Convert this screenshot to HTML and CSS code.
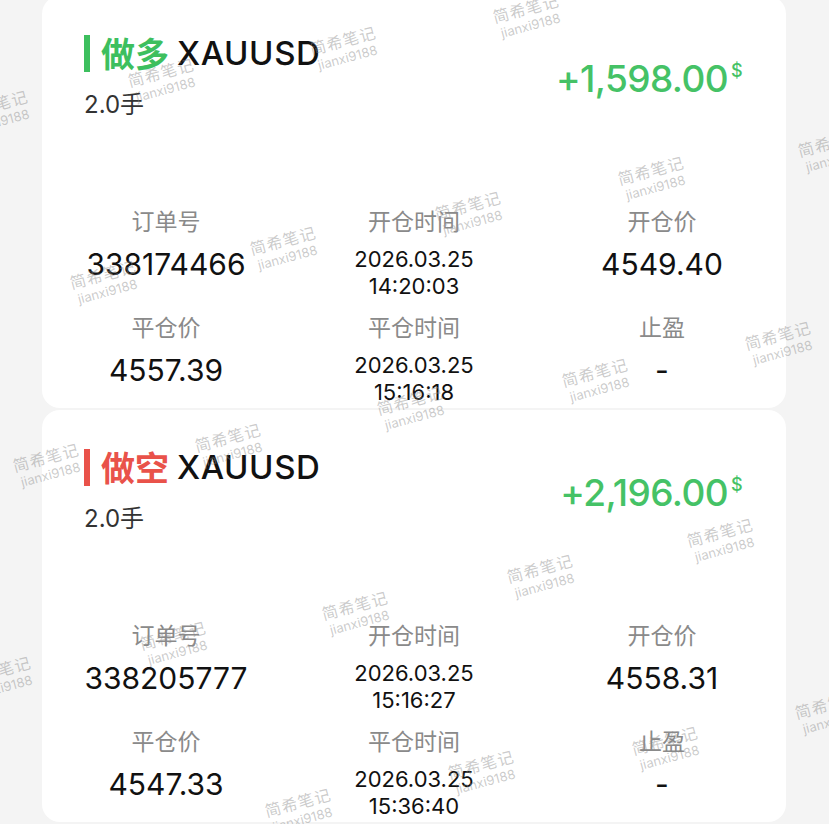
FILE: index.html
```html
<!DOCTYPE html>
<html lang="zh-CN">
<head>
    <meta charset="UTF-8">
    <meta name="viewport" content="width=device-width, initial-scale=1.0">
    <title>交易记录</title>
    <link rel="stylesheet" href="styles.css">
</head>
<body>
    <div class="list">
        <div class="card">
            <div class="card-head">
                <div class="head-left">
                    <div class="title">
                        <span class="bar bar-long"></span>
                        <span class="side side-long">做多</span>
                        <span class="symbol">XAUUSD</span>
                    </div>
                    <div class="lots">2.0手</div>
                </div>
                <div class="profit">+1,598.00<span class="unit">$</span></div>
            </div>
            <div class="info">
                <div class="cell">
                    <div class="label">订单号</div>
                    <div class="value">338174466</div>
                </div>
                <div class="cell">
                    <div class="label">开仓时间</div>
                    <div class="value time">2026.03.25<br>14:20:03</div>
                </div>
                <div class="cell">
                    <div class="label">开仓价</div>
                    <div class="value">4549.40</div>
                </div>
                <div class="cell">
                    <div class="label">平仓价</div>
                    <div class="value">4557.39</div>
                </div>
                <div class="cell">
                    <div class="label">平仓时间</div>
                    <div class="value time">2026.03.25<br>15:16:18</div>
                </div>
                <div class="cell">
                    <div class="label">止盈</div>
                    <div class="value">-</div>
                </div>
            </div>
        </div>

        <div class="card">
            <div class="card-head">
                <div class="head-left">
                    <div class="title">
                        <span class="bar bar-short"></span>
                        <span class="side side-short">做空</span>
                        <span class="symbol">XAUUSD</span>
                    </div>
                    <div class="lots">2.0手</div>
                </div>
                <div class="profit">+2,196.00<span class="unit">$</span></div>
            </div>
            <div class="info">
                <div class="cell">
                    <div class="label">订单号</div>
                    <div class="value">338205777</div>
                </div>
                <div class="cell">
                    <div class="label">开仓时间</div>
                    <div class="value time">2026.03.25<br>15:16:27</div>
                </div>
                <div class="cell">
                    <div class="label">开仓价</div>
                    <div class="value">4558.31</div>
                </div>
                <div class="cell">
                    <div class="label">平仓价</div>
                    <div class="value">4547.33</div>
                </div>
                <div class="cell">
                    <div class="label">平仓时间</div>
                    <div class="value time">2026.03.25<br>15:36:40</div>
                </div>
                <div class="cell">
                    <div class="label">止盈</div>
                    <div class="value">-</div>
                </div>
            </div>
        </div>
    </div>

    <div class="watermarks" id="watermarks"></div>

    <script>
        // watermark centres, measured off the screen
        const marks = [
            [528, 16], [163, 80], [345, 48], [-3, 112], [833, 150],
            [653, 178], [470, 213], [285, 248], [105, 282], [780, 343],
            [597, 380], [412, 408], [230, 445], [48, 465], [722, 540],
            [542, 576], [357, 613], [175, 643], [0, 678], [830, 712],
            [667, 748], [483, 772], [300, 810]
        ];

        const layer = document.getElementById('watermarks');
        marks.forEach(([x, y]) => {
            const mark = document.createElement('div');
            mark.className = 'mark';
            mark.style.left = x + 'px';
            mark.style.top = y + 'px';
            mark.innerHTML = '<span class="mark-cn">简希笔记</span><span class="mark-en">jianxi9188</span>';
            layer.appendChild(mark);
        });
    </script>
</body>
</html>
```

FILE: styles.css
```css
body {
    margin: 0;
    background-color: #f4f4f4;
    font-family: "Inter", "Noto Sans CJK SC", sans-serif;
    color: #111;
    overflow: hidden;
}
.list {
    display: flex;
    flex-direction: column;
    gap: 2px;
    margin: -4px 43px 0 42px;
}
.card {
    background-color: #fff;
    border-radius: 18px;
    padding-bottom: 2px;
}
.card-head {
    display: flex;
    justify-content: space-between;
    align-items: center;
    padding: 37px 44px 0 42px;
}
.title {
    display: flex;
    align-items: center;
    height: 40px;
}
.bar {
    width: 6px;
    height: 37px;
    margin-right: 11px;
}
.bar-long {
    background-color: #3dbf5e;
}
.bar-short {
    background-color: #e9524a;
}
.side {
    font-family: "Noto Sans CJK SC", sans-serif;
    font-size: 34px;
    font-weight: 700;
    line-height: 40px;
    margin-right: 8px;
}
.side-long {
    color: #3dbf5e;
}
.side-short {
    color: #e9524a;
}
.symbol {
    font-size: 33px;
    font-weight: 500;
    line-height: 40px;
    color: #111;
    letter-spacing: 0.6px;
}
.lots {
    margin-top: 17px;
    font-size: 24px;
    line-height: 30px;
    color: #333;
}
.profit {
    font-size: 37px;
    font-weight: 500;
    color: #45c266;
    margin-top: 4px;
    letter-spacing: -0.6px;
}
.profit .unit {
    font-size: 18px;
    vertical-align: 15px;
    margin-left: 3px;
}
.info {
    display: grid;
    grid-template-columns: repeat(3, 1fr);
    row-gap: 13px;
    margin-top: 87px;
    text-align: center;
}
.label {
    font-size: 23px;
    line-height: 30px;
    color: #8a8a8a;
}
.value {
    margin-top: 9px;
    font-size: 30px;
    line-height: 36px;
    color: #111;
}
.value.time {
    font-size: 22px;
    line-height: 27px;
}
.watermarks {
    position: absolute;
    top: 0;
    left: 0;
    width: 100%;
    height: 100%;
    pointer-events: none;
}
.mark {
    position: absolute;
    display: flex;
    flex-direction: column;
    align-items: center;
    transform: translate(-50%, -50%) rotate(-15deg);
    color: rgba(140, 140, 140, 0.45);
    white-space: nowrap;
}
.mark-cn {
    font-family: "Noto Sans CJK SC", sans-serif;
    font-size: 16px;
    line-height: 19px;
    letter-spacing: 1px;
}
.mark-en {
    font-size: 13px;
    line-height: 16px;
}
```
